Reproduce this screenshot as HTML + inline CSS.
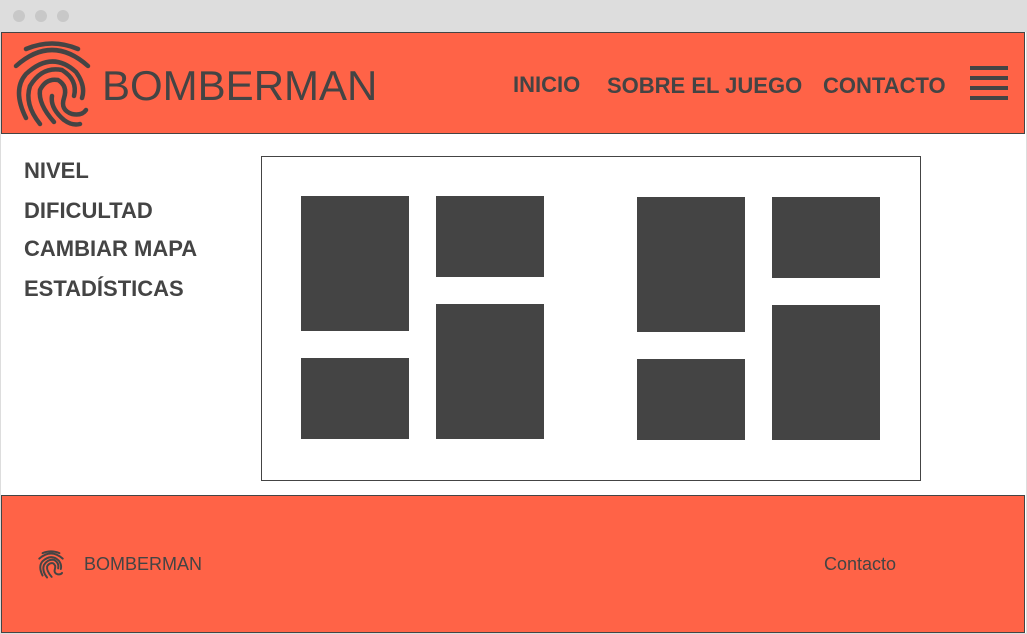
<!DOCTYPE html>
<html><head><meta charset="utf-8"><style>
*{margin:0;padding:0;box-sizing:border-box}
body{width:1027px;height:634px;background:#ddd;font-family:"Liberation Sans",sans-serif;position:relative;overflow:hidden;color:#444}
.dot{position:absolute;top:10px;width:12px;height:12px;border-radius:50%;background:#c8c8c8}
.page{position:absolute;left:1px;top:32px;width:1025px;height:601px;background:#fff}
header{position:absolute;left:1px;top:32px;width:1024px;height:102px;background:#ff6347;border:1px solid #444}
footer{position:absolute;left:1px;top:495px;width:1024px;height:138px;background:#ff6347;border:1px solid #444}
.t{position:absolute;white-space:nowrap}
.nav{font-weight:bold;font-size:22px}
.side{font-weight:bold;font-size:22px;left:24px}
.box{position:absolute;left:261px;top:156px;width:660px;height:325px;border:1px solid #444;background:#fff}
.b{position:absolute;background:#444}
.hb{position:absolute;left:970px;width:38px;height:4px;background:#444}
</style></head><body>
<div class="dot" style="left:13px"></div><div class="dot" style="left:35px"></div><div class="dot" style="left:57px"></div>
<div class="page"></div>
<header></header>
<svg style="position:absolute;left:12px;top:40px" width="80" height="88" viewBox="0 0 80 88" fill="none" stroke="#444" stroke-width="4.5" stroke-linecap="round">
<path d="M14 9 Q40 -2 66 9"/>
<path d="M4 26 Q40 -6 76 26"/>
<path d="M14 78 Q0 50 14 34 Q40 10 64 32 Q74 46 70 58"/>
<path d="M28 84 Q12 64 18 46 Q30 26 50 30 Q66 40 62 56"/>
<path d="M42 82 Q26 64 28 50 Q34 38 46 40 Q56 46 52 58 Q48 70 60 74 Q70 76 74 70"/>
<path d="M40 56 Q38 68 52 80 Q60 86 68 84"/>
</svg>
<div class="t" style="left:102px;top:62px;font-size:42px">BOMBERMAN</div>
<div class="t nav" style="left:513px;top:72px">INICIO</div>
<div class="t nav" style="left:607px;top:73px">SOBRE EL JUEGO</div>
<div class="t nav" style="left:823px;top:73px">CONTACTO</div>
<div class="hb" style="top:66px"></div><div class="hb" style="top:76px"></div><div class="hb" style="top:86px"></div><div class="hb" style="top:96px"></div>
<div class="t side" style="top:158px">NIVEL</div>
<div class="t side" style="top:198px">DIFICULTAD</div>
<div class="t side" style="top:236px">CAMBIAR MAPA</div>
<div class="t side" style="top:276px">ESTADÍSTICAS</div>
<div class="box"></div>
<div class="b" style="left:301px;top:196px;width:108px;height:135px"></div>
<div class="b" style="left:436px;top:196px;width:108px;height:81px"></div>
<div class="b" style="left:301px;top:358px;width:108px;height:81px"></div>
<div class="b" style="left:436px;top:304px;width:108px;height:135px"></div>
<div class="b" style="left:637px;top:197px;width:108px;height:135px"></div>
<div class="b" style="left:772px;top:197px;width:108px;height:81px"></div>
<div class="b" style="left:637px;top:359px;width:108px;height:81px"></div>
<div class="b" style="left:772px;top:305px;width:108px;height:135px"></div>
<footer></footer>
<svg style="position:absolute;left:38px;top:550px" width="26" height="29" viewBox="0 0 80 88" fill="none" stroke="#444" stroke-width="6" stroke-linecap="round">
<path d="M14 9 Q40 -2 66 9"/>
<path d="M4 26 Q40 -6 76 26"/>
<path d="M14 78 Q0 50 14 34 Q40 10 64 32 Q74 46 70 58"/>
<path d="M28 84 Q12 64 18 46 Q30 26 50 30 Q66 40 62 56"/>
<path d="M42 82 Q26 64 28 50 Q34 38 46 40 Q56 46 52 58 Q48 70 60 74 Q70 76 74 70"/>
</svg>
<div class="t" style="left:84px;top:554px;font-size:18px">BOMBERMAN</div>
<div class="t" style="left:824px;top:554px;font-size:18px">Contacto</div>
</body></html>
